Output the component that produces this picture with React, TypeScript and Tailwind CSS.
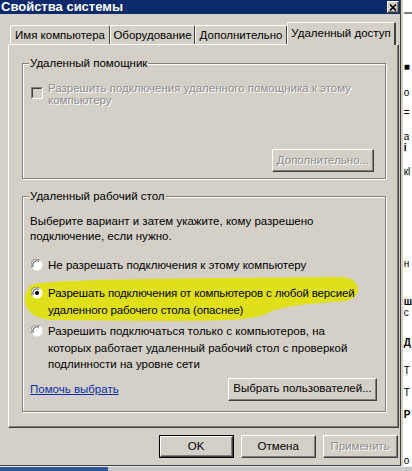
import React from "react";

const FONT = { fontFamily: '"Liberation Sans", Arial, sans-serif' };

const raised =
  "border border-t-white border-l-white border-r-[#404040] border-b-[#404040] shadow-[inset_-1px_-1px_0_#808080] bg-[#d4d0c8]";

function Radio({ checked }: { checked?: boolean }) {
  return (
    <svg width="12" height="12" viewBox="0 0 12 12" className="shrink-0">
      <circle cx="6" cy="6" r="5.5" fill="#fff" />
      <path d="M1.2 8.5 A5.2 5.2 0 0 1 8.5 1.2" stroke="#808080" strokeWidth="1" fill="none" />
      <path d="M2.2 7.8 A4.2 4.2 0 0 1 7.8 2.2" stroke="#404040" strokeWidth="1" fill="none" />
      {checked && <circle cx="6" cy="6" r="2" fill="#000" />}
    </svg>
  );
}

function Tab({ label, w, active }: { label: string; w: string; active?: boolean }) {
  if (active) {
    return (
      <div
        className={`relative z-10 ${w} h-[23px] -mb-px bg-[#d4d0c8] border-t border-l border-t-white border-l-white border-r-2 border-r-[#404040] rounded-t-[2px] flex items-start justify-center pt-[3px] text-[11.5px] leading-[14px] text-black`}
      >
        {label}
      </div>
    );
  }
  return (
    <div
      className={`${w} h-[19px] bg-[#d4d0c8] border-t border-l border-t-white border-l-white border-r border-r-[#404040] rounded-t-[2px] flex items-start justify-center pt-[2px] text-[11.5px] leading-[14px] text-black`}
    >
      {label}
    </div>
  );
}

function Btn({
  children,
  w,
  disabled,
  def,
}: {
  children: React.ReactNode;
  w: string;
  disabled?: boolean;
  def?: boolean;
}) {
  const txt = disabled
    ? "text-[#8e8e8e] [text-shadow:1px_1px_0_#fff]"
    : "text-black";
  if (def) {
    return (
      <div className={`${w} h-[23px] border border-black`}>
        <div className={`w-full h-full ${raised} flex items-center justify-center text-[11.5px] ${txt}`}>
          {children}
        </div>
      </div>
    );
  }
  return (
    <div className={`${w} h-[23px] ${raised} flex items-center justify-center text-[11.5px] ${txt}`}>
      {children}
    </div>
  );
}

function Group({
  label,
  h,
  className,
  children,
}: {
  label: string;
  h: string;
  className?: string;
  children: React.ReactNode;
}) {
  return (
    <div
      className={`relative w-[364px] ${h} border border-[#808080] shadow-[1px_1px_0_#fff,inset_1px_1px_0_#fff] ${className ?? ""}`}
    >
      <div className="absolute left-[6px] -top-[8px] px-[1px] bg-[#d4d0c8] text-[11.5px] leading-[14px] text-black z-20">
        {label}
      </div>
      {children}
    </div>
  );
}

export default function App() {
  return (
    <div className="relative w-[412px] h-[471px] overflow-hidden bg-white" style={FONT}>
      <div className="flex h-[466px]">
        {/* window */}
        <div className="w-[403px] h-full flex flex-col bg-[#d4d0c8] border-r border-b border-[#404040]">
          {/* title bar */}
          <div className="h-[14px] bg-[#0b2a6c] flex items-center justify-between pl-[1px] pr-[1px]">
            <span className="text-white font-bold text-[13px] leading-[14px]">
              Свойства системы
            </span>
            <div className={`w-[12px] h-[12px] ${raised} flex items-center justify-center`}>
              <svg width="8" height="7" viewBox="0 0 8 7">
                <path d="M1 0.5 L7 6.5 M7 0.5 L1 6.5" stroke="#000" strokeWidth="1.6" />
              </svg>
            </div>
          </div>

          {/* tabs */}
          <div className="mt-[8px] h-[22px] pl-[10px] flex items-end">
            <Tab label="Имя компьютера" w="w-[100px]" />
            <Tab label="Оборудование" w="w-[85px]" />
            <Tab label="Дополнительно" w="w-[92px]" />
            <Tab label="Удаленный доступ" w="w-[109px]" active />
          </div>

          {/* panel */}
          <div className="ml-[8px] w-[391px] h-[384px] border-t border-l border-t-white border-l-white border-r border-b border-r-[#404040] border-b-[#404040] shadow-[inset_-1px_-1px_0_#808080] pt-[18px] pl-[13px]">
            <Group label="Удаленный помощник" h="h-[116px]">
              <div className="flex pt-[18px] pl-[8px]">
                <div className="mt-[5px] w-[12px] h-[12px] border border-t-[#808080] border-l-[#808080] border-r-white border-b-white shrink-0">
                  <div className="w-full h-full border border-t-[#404040] border-l-[#404040] border-r-[#d4d0c8] border-b-[#d4d0c8]" />
                </div>
                <div className="ml-[5px] text-[11.5px] leading-[12px] text-[#8e8e8e] [text-shadow:1px_1px_0_#fff]">
                  Разрешить подключения удаленного помощника к этому
                  <br />
                  компьютеру
                </div>
              </div>
              <div className="mt-[43px] flex justify-end pr-[11px]">
                <Btn w="w-[102px]" disabled>
                  Дополнительно...
                </Btn>
              </div>
            </Group>

            <Group label="Удаленный рабочий стол" h="h-[216px]" className="mt-[17px]">
              <svg
                className="absolute left-0 top-0"
                width="362"
                height="214"
                viewBox="23 197 362 214"
              >
                <path
                  d="M35 284 C60 279 200 278 340 277 C362 277 364 298 345 301 C310 304 285 305 268 313 C255 320 230 321 150 321 L55 320 C28 319 22 305 26 293 C28 287 30 285 35 284 Z"
                  fill="#e0e01a"
                />
              </svg>
              <div className="relative pt-[17px] pl-[7px] text-[11.5px] text-black">
                <div className="leading-[15px]">
                  Выберите вариант и затем укажите, кому разрешено
                  <br />
                  подключение, если нужно.
                </div>
                <div className="mt-[13px] flex items-start leading-[16px] pl-[1px]">
                  <div className="mt-[2px]">
                    <Radio />
                  </div>
                  <div className="ml-[5px]">Не разрешать подключения к этому компьютеру</div>
                </div>
                <div className="mt-[12px] flex items-start leading-[17px] pl-[1px]">
                  <div className="mt-[2px]">
                    <Radio checked />
                  </div>
                  <div className="ml-[5px] tracking-[-0.15px]">
                    Разрешать подключения от компьютеров с любой версией
                    <br />
                    удаленного рабочего стола (опаснее)
                  </div>
                </div>
                <div className="mt-[4px] flex items-start leading-[16.5px] pl-[1px]">
                  <div className="mt-[2px]">
                    <Radio />
                  </div>
                  <div className="ml-[5px]">
                    Разрешить подключаться только с компьютеров, на
                    <br />
                    которых работает удаленный рабочий стол с проверкой
                    <br />
                    подлинности на уровне сети
                  </div>
                </div>
                <div className="mt-[5px] flex items-center justify-between pr-[8px]">
                  <span className="text-[#0a2fa8] underline leading-[14px]">Помочь выбрать</span>
                  <Btn w="w-[149px]">Выбрать пользователей...</Btn>
                </div>
              </div>
            </Group>
          </div>

          {/* bottom buttons */}
          <div className="mt-[7px] flex justify-end gap-[7px] pr-[2px]">
            <Btn w="w-[75px]" def>
              OK
            </Btn>
            <Btn w="w-[75px]">Отмена</Btn>
            <Btn w="w-[75px]" disabled>
              Применить
            </Btn>
          </div>
        </div>

        {/* right strip: fragment of another window */}
        <div className="flex-1 flex">
          <div className="w-[2px] bg-[#d4d0c8]" />
          <div className="flex-1 bg-white flex flex-col text-[10px] leading-[10px] text-black overflow-hidden pl-[1px]">
            <div className="h-[14px] bg-white" />
            <div className="h-[2px] bg-[#808080]" />
            <div className="mt-[48px] font-bold">■</div>
            <div className="mt-[16px]">о</div>
            <div className="mt-[10px]">=</div>
            <div className="mt-[14px]">а</div>
            <div className="mt-[1px] font-bold">і</div>
            <div className="mt-[14px]">кl</div>
            <div className="mt-[82px]">н</div>
            <div className="mt-[28px] font-bold">ш</div>
            <div className="mt-[1px]">с</div>
            <div className="mt-[20px] font-bold">Д</div>
            <div className="mt-[18px]">Т</div>
            <div className="mt-[12px]">Т</div>
            <div className="mt-[12px] font-bold">Р</div>
            <div className="mt-[36px]">о</div>
          </div>
        </div>
      </div>

      {/* taskbar fragment */}
      <div className="h-[5px] flex border-t border-[#e8e8e8]">
        <div className="w-[108px] bg-[#2d5a92]" />
        <div className="flex-1 bg-[#c8c8c8]" />
      </div>
    </div>
  );
}
